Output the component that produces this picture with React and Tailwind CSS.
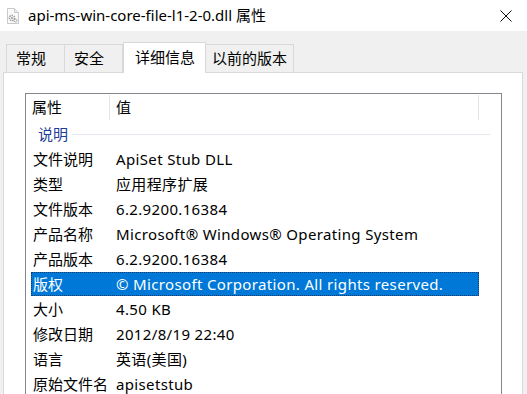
import React from "react";

const rows = [
  ["文件说明", "ApiSet Stub DLL"],
  ["类型", "应用程序扩展"],
  ["文件版本", "6.2.9200.16384"],
  ["产品名称", "Microsoft® Windows® Operating System"],
  ["产品版本", "6.2.9200.16384"],
  ["版权", "© Microsoft Corporation. All rights reserved.", true],
  ["大小", "4.50 KB"],
  ["修改日期", "2012/8/19 22:40"],
  ["语言", "英语(美国)"],
  ["原始文件名", "apisetstub"],
];

function FileIcon() {
  return (
    <svg width="14" height="16" viewBox="0 0 14 16">
      <path d="M1.5 0.5h7l4 4v11h-11z" fill="#fafafa" stroke="#c8c8c8" />
      <path d="M8.5 0.5v4h4" fill="#ececec" stroke="#c8c8c8" />
      <circle cx="6" cy="10" r="2.6" fill="none" stroke="#9a9a9a" strokeWidth="1.6" strokeDasharray="1.4 0.9" />
      <circle cx="6" cy="10" r="1" fill="#9a9a9a" />
      <circle cx="9.5" cy="12.5" r="1.5" fill="none" stroke="#a8a8a8" strokeWidth="1" />
    </svg>
  );
}

export default function App() {
  const font = { fontFamily: '"Noto Sans", "Noto Sans CJK SC", sans-serif' };
  return (
    <div className="w-[527px] h-[394px] overflow-hidden bg-[#f0f0f0] text-black" style={font}>
      {/* title bar */}
      <div className="h-[31px] bg-white flex items-center">
        <div className="ml-[6px] w-[14px] flex items-center"><FileIcon /></div>
        <div className="ml-[8px] text-[15px] leading-none flex-1">api-ms-win-core-file-l1-2-0.dll 属性</div>
        <svg width="12" height="12" viewBox="0 0 12 12" className="mr-[15px]">
          <path d="M0.5 0.5L11.5 11.5M11.5 0.5L0.5 11.5" stroke="#111" strokeWidth="1" />
        </svg>
      </div>
      {/* tabs */}
      <div className="h-[41px] flex items-end pl-[6px] text-[15px] leading-none">
        <div className="w-[59px] h-[28px] border border-b-0 border-[#d9d9d9] flex items-center pl-[9px]">常规</div>
        <div className="w-[58px] h-[28px] border border-b-0 border-l-0 border-[#d9d9d9] flex items-center pl-[9px]">安全</div>
        <div className="w-[83px] h-[31px] border border-b-0 border-[#d9d9d9] bg-white flex items-center pl-[11px] pb-[2px] relative z-10 -mb-px">详细信息</div>
        <div className="w-[88px] h-[28px] border border-b-0 border-l-0 border-[#d9d9d9] flex items-center pl-[6px]">以前的版本</div>
      </div>
      {/* panel */}
      <div className="ml-[3px] w-[520px] h-[330px] border border-b-0 border-[#d9d9d9] bg-white pl-[21px] pr-[20px] pt-[20px]">
        <div className="h-[320px] border border-b-0 border-[#828790] text-[15px] leading-none">
          {/* header */}
          <div className="h-[27px] flex items-stretch">
            <div className="w-[84px] flex items-center pl-[6px] border-r border-[#e5e5e5] my-[1px]">属性</div>
            <div className="w-[369px] flex items-center pl-[6px] border-r border-[#e5e5e5] my-[1px]">值</div>
          </div>
          {/* group */}
          <div className="h-[26px] flex items-center pl-[12px] pr-[11px]">
            <span className="text-[#1e3c96] text-[15px]">说明</span>
            <div className="flex-1 ml-[4px] h-px bg-[#e2e8ee]" />
          </div>
          {rows.map(([k, v, sel]) => (
            <div key={k} className="h-[25px] flex items-start pl-[5px]">
              <div
                className={
                  "w-[448px] h-[24px] flex items-center " +
                  (sel ? "bg-[#0078d7] text-white outline outline-1 outline-dotted outline-[#1b3a66] -outline-offset-1" : "")
                }
              >
                <div className="w-[79px] pl-[2px]">{k}</div>
                <div className="pl-[6px] whitespace-nowrap tracking-[0.35px]">{v}</div>
              </div>
            </div>
          ))}
        </div>
      </div>
    </div>
  );
}
